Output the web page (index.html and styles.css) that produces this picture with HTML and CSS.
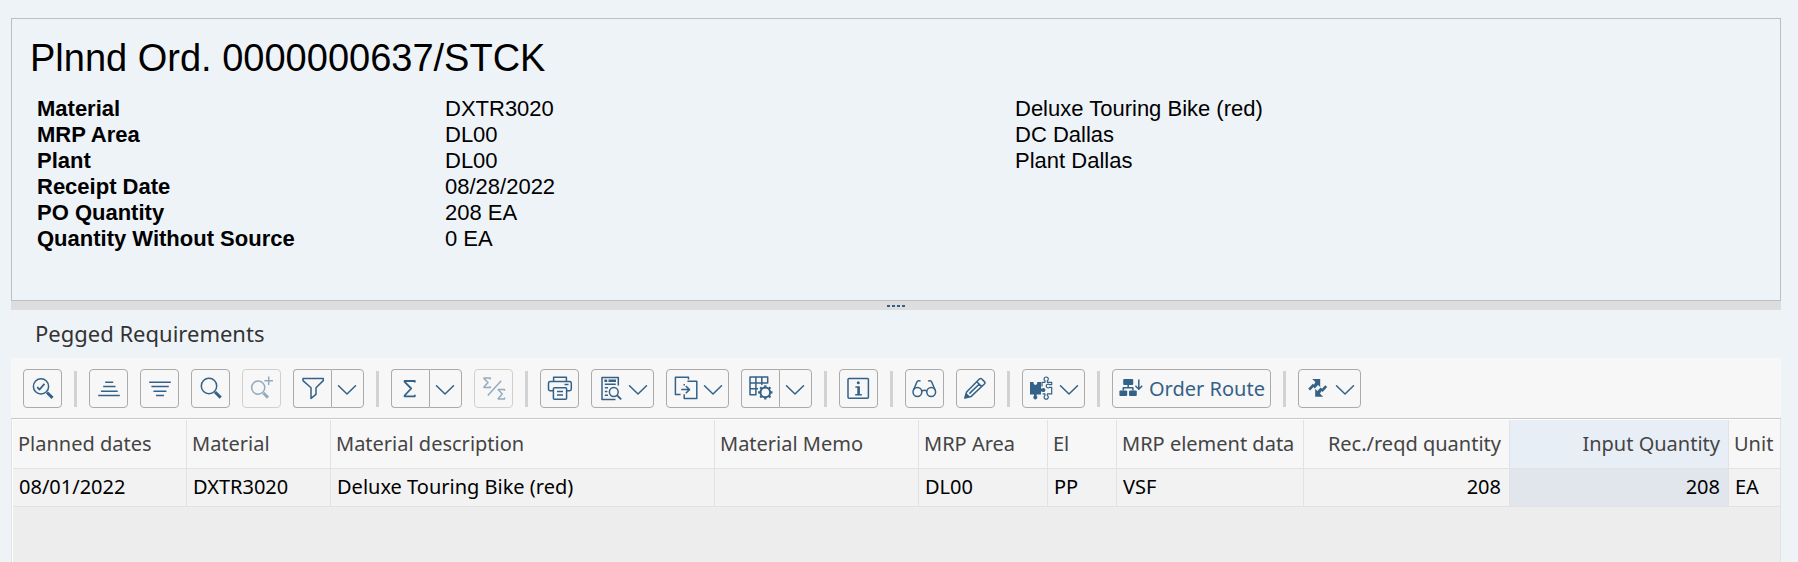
FILE: index.html
```html
<!DOCTYPE html>
<html lang="en">
<head>
<meta charset="utf-8">
<meta name="viewport" content="width=device-width, initial-scale=1">
<title>Plnnd Ord. 0000000637/STCK</title>
<link rel="stylesheet" href="styles.css">
</head>
<body>
<main class="page">
  <section class="order">
    <h1 class="order-title">Plnnd Ord. 0000000637/STCK</h1>
    <table class="fields">
      <colgroup><col class="f-label"><col class="f-value"><col class="f-text"></colgroup>
      <tbody>
        <tr><th scope="row">Material</th><td>DXTR3020</td><td>Deluxe Touring Bike (red)</td></tr>
        <tr><th scope="row">MRP Area</th><td>DL00</td><td>DC Dallas</td></tr>
        <tr><th scope="row">Plant</th><td>DL00</td><td>Plant Dallas</td></tr>
        <tr><th scope="row">Receipt Date</th><td>08/28/2022</td><td></td></tr>
        <tr><th scope="row">PO Quantity</th><td>208 EA</td><td></td></tr>
        <tr><th scope="row">Quantity Without Source</th><td>0 EA</td><td></td></tr>
      </tbody>
    </table>
  </section>

  <div class="splitter" role="separator" aria-orientation="horizontal"><i></i><i></i><i></i><i></i></div>

  <section class="pegging">
    <h2 class="pegging-title">Pegged Requirements</h2>

    <div class="toolbar" role="toolbar" aria-label="Pegged Requirements">
      <button class="btn" type="button" aria-label="Details">
        <svg class="icon" viewBox="0 0 27 27"><circle cx="12" cy="11.4" r="7.6"/><path d="M8.2 12.2l2.4 2.3 4.8-5.7" stroke-width="1.8"/><path class="thick" d="M18 17.5l5.5 5.3"/></svg>
      </button>
      <span class="sep"></span>
      <button class="btn" type="button" aria-label="Sort ascending">
        <svg class="icon" viewBox="0 0 27 27"><path d="M10.2 7.3h8M8.2 11.6h12.3M5.9 16.2h16.8M3.2 20.6h21.6"/></svg>
      </button>
      <button class="btn" type="button" aria-label="Sort descending">
        <svg class="icon" viewBox="0 0 27 27"><path d="M3.2 7.3h21.6M5.4 11.6h17.4M7.4 16.2h13M10 20.6h8"/></svg>
      </button>
      <button class="btn" type="button" aria-label="Find">
        <svg class="icon" viewBox="0 0 27 27"><circle cx="12" cy="11" r="7.7"/><path class="thick" d="M18 17l5.7 5.6"/></svg>
      </button>
      <button class="btn" type="button" aria-label="Find next" disabled>
        <svg class="icon" viewBox="0 0 27 27"><circle cx="10.2" cy="12.6" r="6.6"/><path class="thick" d="M15.4 18l4.6 4.6"/><path d="M20.7 1.5v8.6M16.4 5.8H25"/></svg>
      </button>
      <div class="split">
        <button class="btn" type="button" aria-label="Filter">
          <svg class="icon" viewBox="0 0 27 27"><path d="M4 3.6h20.3v2L17 12.8v6.6l-5 4v-10.6L4 5.6z"/></svg>
        </button>
        <button class="btn" type="button" aria-label="Filter menu">
          <svg class="chev" viewBox="0 0 20 27"><path d="M1.5 10.8l8.5 8.2 8.5-8.2"/></svg>
        </button>
      </div>
      <span class="sep"></span>
      <div class="split">
        <button class="btn" type="button" aria-label="Total">
          <svg class="icon" viewBox="0 0 27 27"><path d="M17.8 7.6V6H7.6v.8l6.6 6.7-6.6 7v.8h10.2v-1.6" stroke-width="1.8"/></svg>
        </button>
        <button class="btn" type="button" aria-label="Total menu">
          <svg class="chev" viewBox="0 0 20 27"><path d="M1.5 10.8l8.5 8.2 8.5-8.2"/></svg>
        </button>
      </div>
      <button class="btn" type="button" aria-label="Subtotal" disabled>
        <svg class="icon" viewBox="0 0 27 27"><path d="M10.2 4.4V3H4v.4l4 4.2-4 4.5v.5h6.2v-1.4M24.5 15.8v-1.4h-6.2v.4l4 4.2-4 4.5v.5h6.2v-1.4M21.2 5.8L7.8 20.4"/></svg>
      </button>
      <span class="sep"></span>
      <button class="btn" type="button" aria-label="Print">
        <svg class="icon" viewBox="0 0 27 27"><path d="M7.6 6.6V2.3h12.8v4.3M7.4 15.7H4.2q-1.7 0-1.7-1.7V8.3q0-1.7 1.7-1.7h19.4q1.7 0 1.7 1.7V14q0 1.7-1.7 1.7h-3.2M18.5 9.6h4"/><rect x="7.4" y="12.8" width="13.2" height="11.5" rx="1"/><path d="M11 16.6h6M11 19.9h6"/></svg>
      </button>
      <button class="btn" type="button" aria-label="Views">
        <svg class="icon" viewBox="0 0 27 27"><path d="M21.3 10.5V2.6H5v21.8h13.5M7.8 9.2h11M7.8 12.8H11M7.8 16.5h2.6M7.8 20.3H11"/><path class="solid" d="M7.4 4.4h2.8V7H7.4zM11.5 4.4H19V7h-7.5z"/><circle cx="16.8" cy="17" r="4.4"/><path d="M20 20.4l4.2 4" stroke-width="2"/></svg>
        <svg class="chev" viewBox="0 0 20 27"><path d="M1.5 10.8l8.5 8.2 8.5-8.2"/></svg>
      </button>
      <button class="btn" type="button" aria-label="Export">
        <svg class="icon" viewBox="0 0 27 27"><path d="M16.5 4.4V2.2H3.4v17.2h5.2M15.4 6.3h9.4v17.3H12.2v-4.4M12.2 10.4V9M9.2 14.6h8.2M13.8 11l3.7 3.6-3.7 3.6"/></svg>
        <svg class="chev" viewBox="0 0 20 27"><path d="M1.5 10.8l8.5 8.2 8.5-8.2"/></svg>
      </button>
      <div class="split">
        <button class="btn" type="button" aria-label="Layout">
          <svg class="icon" viewBox="0 0 27 27"><path d="M20.7 8.5V2H3v17.7h6.5M8.9 2v17.7M14.8 2v8M3 7.9h17.7M3 13.8h8"/><circle cx="18.3" cy="17.4" r="4.8" stroke-width="2"/><path stroke-width="2.2" d="M18.3 10.2v2.4M18.3 22.2v2.4M11.1 17.4h2.4M23.1 17.4h2.4M13.2 12.3l1.7 1.7M21.7 20.8l1.7 1.7M13.2 22.5l1.7-1.7M21.7 14l1.7-1.7"/></svg>
        </button>
        <button class="btn" type="button" aria-label="Layout menu">
          <svg class="chev" viewBox="0 0 20 27"><path d="M1.5 10.8l8.5 8.2 8.5-8.2"/></svg>
        </button>
      </div>
      <span class="sep"></span>
      <button class="btn" type="button" aria-label="Information">
        <svg class="icon" viewBox="0 0 27 27"><rect x="3" y="3.5" width="20.4" height="19.8" rx="1"/><circle class="solid" cx="13.3" cy="7.7" r="1.5"/><path class="solid" d="M10.4 11.2h4.5v7.7h1.9v1.5h-6.6v-1.5h2.1v-6.2h-1.9z"/></svg>
      </button>
      <span class="sep"></span>
      <button class="btn" type="button" aria-label="Display">
        <svg class="icon" viewBox="0 0 27 27"><circle cx="6.4" cy="17" r="4.4"/><circle cx="20.2" cy="17" r="4.4"/><path d="M10.7 16q2.6-1.4 5.2 0M2.4 15.3L5.8 7.2Q7 4.8 9.6 6.2M24.2 15.3l-3.4-8.1Q19.6 4.8 17 6.2"/></svg>
      </button>
      <button class="btn" type="button" aria-label="Change">
        <svg class="icon" viewBox="0 0 27 27"><path d="M2.8 23l1.8-6L17.4 4q1.2-1.2 2.4 0l2.6 2.6q1.2 1.2 0 2.4L9.2 21.4zM14.8 6.8l4.8 4.8M7.4 18.6L17.3 9"/><path class="solid" d="M2.8 23l1.5-5 3.7 3.5z"/></svg>
      </button>
      <span class="sep"></span>
      <button class="btn" type="button" aria-label="Extensions">
        <svg class="icon" viewBox="0 0 27 27"><path class="solid" d="M2 7h3.6v1.6a1.9 1.9 0 0 0 3.6 0V7H13v6.6h1a2 2 0 1 1 0 2.8h-1v3.2H8.6v1.2a2 2 0 1 1-2.6 0v-1.2H2z"/><path d="M14 11.4V7.3h3V5.8a2.1 2.1 0 1 1 2.4 0v1.5h4.3v2.4h-2.2a1.9 1.9 0 1 0 0 2.6h2.2v6.6h-4.3v1.5a2.1 2.1 0 1 1-2.4 0v-1.5h-2.4" stroke-width="1.2"/></svg>
        <svg class="chev" viewBox="0 0 20 27"><path d="M1.5 10.8l8.5 8.2 8.5-8.2"/></svg>
      </button>
      <span class="sep"></span>
      <button class="btn" type="button">
        <svg class="icon" viewBox="0 0 27 27"><rect class="solid" x="5.2" y="4" width="10" height="6" rx="1"/><rect class="solid" x="1.4" y="15.5" width="7.8" height="5.6" rx="1"/><rect class="solid" x="11" y="15.5" width="7.8" height="5.6" rx="1"/><path d="M10.2 10v2.7M5.3 15.5v-2.8h9.6v2.8M20.8 4.5v9.5M17.4 10.8l3.4 3.4 3.4-3.4"/></svg>
        Order Route
      </button>
      <span class="sep"></span>
      <button class="btn" type="button" aria-label="Navigation">
        <svg class="icon" viewBox="0 0 27 27"><path class="solid" d="M8.2 4h8v8l-2.2-2.1-3.2 3.5-1.4-1.3-3.2 3.4-2-1.8 4.6-4.9 1.2 1L11.4 7zM19.2 21.8h-8v-8l2.2 2.1 3.2-3.5 1.4 1.3 3.2-3.4 2 1.8-4.6 4.9-1.2-1L16 18.8z"/></svg>
        <svg class="chev" viewBox="0 0 20 27"><path d="M1.5 10.8l8.5 8.2 8.5-8.2"/></svg>
      </button>
    </div>

    <div class="grid">
      <table class="reqs">
        <colgroup><col class="c-date"><col class="c-mat"><col class="c-desc"><col class="c-memo"><col class="c-area"><col class="c-el"><col class="c-data"><col class="c-rec"><col class="c-input"><col class="c-unit"></colgroup>
        <thead>
          <tr><th scope="col">Planned dates</th><th scope="col">Material</th><th scope="col">Material description</th><th scope="col">Material Memo</th><th scope="col">MRP Area</th><th scope="col">El</th><th scope="col">MRP element data</th><th scope="col" class="num">Rec./reqd quantity</th><th scope="col" class="num input">Input Quantity</th><th scope="col">Unit</th></tr>
        </thead>
        <tbody>
          <tr><td>08/01/2022</td><td>DXTR3020</td><td>Deluxe Touring Bike (red)</td><td></td><td>DL00</td><td>PP</td><td>VSF</td><td class="num">208</td><td class="num input">208</td><td>EA</td></tr>
        </tbody>
      </table>
    </div>
  </section>
</main>
</body>
</html>
```

FILE: styles.css
```css
* { box-sizing: border-box; }

body {
  margin: 0;
  background: #eef3f8;
  color: #000;
  font-family: "Noto Sans", "Open Sans", sans-serif;
  font-size: 20px;
}

.page {
  display: flex;
  flex-direction: column;
  min-height: 100vh;
  padding: 18px 17px 0 11px;
}

/* Order header */
.order {
  padding: 17px 0 48px 18px;
  border: 1px solid #bfbfbf;
  font-family: "Liberation Sans", Arial, sans-serif;
}

.order-title {
  margin: 0 0 16px;
  font-size: 38px;
  font-weight: 400;
  line-height: 44px;
}

.fields {
  width: calc(100% - 7px);
  margin-left: 7px;
  border-collapse: collapse;
  table-layout: fixed;
  font-size: 22px;
  line-height: 26px;
}

.fields th,
.fields td {
  height: 26px;
  padding: 0;
  text-align: left;
}

.f-label { width: 408px; }
.f-value { width: 570px; }
.f-text { width: 766px; }

.splitter {
  display: flex;
  align-items: center;
  justify-content: center;
  gap: 2px;
  height: 9px;
  background: #ddd;
}

.splitter i {
  width: 3px;
  height: 2px;
  background: #346187;
}

/* Pegged requirements */
.pegging {
  display: flex;
  flex: 1;
  flex-direction: column;
}

.pegging-title {
  margin: 0;
  padding: 0 24px 2px;
  color: #333;
  font-size: 22px;
  font-weight: 400;
  line-height: 46px;
}

.toolbar {
  display: flex;
  align-items: center;
  gap: 12px;
  padding: 11px 12px 10px;
  border-bottom: 1px solid #c8c8c8;
  background: #f7f7f7;
}

.sep {
  flex: none;
  width: 3px;
  height: 36px;
  background: #cfd3d6;
}

.btn {
  display: flex;
  flex: none;
  align-items: center;
  gap: 4px;
  height: 39px;
  padding: 0 5px;
  border: 1px solid #ababab;
  border-radius: 4px;
  background: #f7f7f7;
  color: #346187;
  font: inherit;
  white-space: nowrap;
}

.btn:disabled { opacity: 0.5; }

.split { display: flex; flex: none; }
.split .btn:first-child { border-right: 0; border-radius: 4px 0 0 4px; }
.split .btn:last-child { padding-right: 6px; border-radius: 0 4px 4px 0; }

.icon,
.chev {
  display: block;
  flex: none;
  height: 27px;
  fill: none;
  stroke: currentColor;
  stroke-width: 1.5;
  stroke-linejoin: round;
}

.icon { width: 27px; }
.chev { width: 20px; stroke-linecap: round; }
.solid { fill: currentColor; stroke: none; }
.thick { stroke-width: 3; }

.grid {
  flex: 1;
  border: solid #e2e2e2;
  border-width: 0 1px;
  background: #ededed;
  box-shadow: inset 1px 1px #fff;
  padding: 1px 0 0 1px;
}

.reqs {
  width: 100%;
  border-collapse: separate;
  border-spacing: 0;
  table-layout: fixed;
  line-height: 24px;
}

.reqs th,
.reqs td {
  overflow: hidden;
  border: solid #e2e2e2;
  border-width: 0 1px 1px 0;
  text-align: left;
  white-space: nowrap;
}

.reqs th {
  height: 49px;
  padding: 0 0 0 5px;
  background: #f7f7f7;
  color: #444;
  font-weight: 400;
}

.reqs td {
  height: 38px;
  padding: 0 0 2px 6px;
  background: #f2f2f2;
}

.reqs th:last-child,
.reqs td:last-child { border-right: 0; }

.reqs .num { padding-right: 8px; text-align: right; }
.reqs th.input { background: #e8eef6; }
.reqs td.input { background: #e0e6ec; }

.c-date { width: 174px; }
.c-mat { width: 144px; }
.c-desc { width: 384px; }
.c-memo { width: 204px; }
.c-area { width: 129px; }
.c-el { width: 69px; }
.c-data { width: 187px; }
.c-rec { width: 206px; }
.c-input { width: 219px; }
.c-unit { width: 51px; }
```
